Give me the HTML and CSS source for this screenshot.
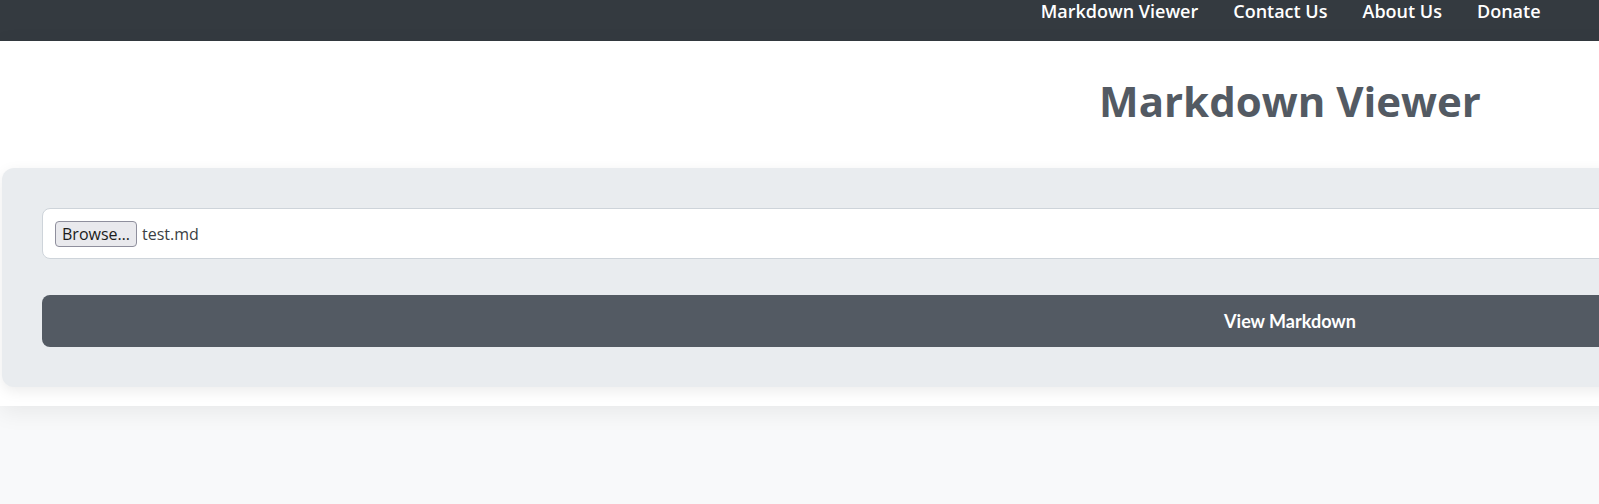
FILE: index.html
```html
<!DOCTYPE html>
<html lang="en">
<head>
<meta charset="utf-8">
<title>Markdown Viewer</title>
<link rel="stylesheet" href="styles.css">
</head>
<body>
<nav class="topbar">
  <ul class="nav-links">
    <li><a href="#">Markdown Viewer</a></li>
    <li><a href="#">Contact Us</a></li>
    <li><a href="#">About Us</a></li>
    <li><a href="#">Donate</a></li>
  </ul>
</nav>
<main class="page">
  <h1 class="title">Markdown Viewer</h1>
  <section class="card">
    <div class="file-input">
      <span class="browse">Browse…</span>
      <span class="file-name">test.md</span>
    </div>
    <button class="view-btn" type="button">View Markdown</button>
  </section>
</main>
</body>
</html>
```
FILE: styles.css
```css
html {
  overflow: hidden;
}
body {
  margin: 0;
  background: #f8f9fa;
  font-family: "Open Sans", "Liberation Sans", sans-serif;
  min-height: 504px;
}
.topbar {
  background: #343a40;
  height: 41px;
  display: flex;
  justify-content: flex-end;
  padding-right: 41px;
}
.nav-links {
  list-style: none;
  margin: 0;
  padding: 0;
  display: flex;
  align-items: flex-start;
}
.nav-links a {
  display: block;
  color: #ffffff;
  text-decoration: none;
  font-weight: 600;
  font-size: 18px;
  line-height: 23px;
  padding: 0 17.5px;
}
.page {
  width: 2580px;
  box-sizing: border-box;
  padding: 35px 2px 19px;
  background: #ffffff;
  box-shadow: 0 6px 22px rgba(0, 0, 0, 0.07);
  position: relative;
}
.title {
  margin: 0 0 42px;
  text-align: center;
  font-size: 42px;
  line-height: 1.2;
  font-weight: 700;
  color: #535a63;
}
.card {
  background: #e9ecef;
  border-radius: 12px;
  padding: 40px;
  box-shadow: 0 4px 14px rgba(0, 0, 0, 0.08);
  display: flex;
  flex-direction: column;
  gap: 36px;
}
.file-input {
  height: 51px;
  box-sizing: border-box;
  background: #ffffff;
  border: 1px solid #ced4da;
  border-radius: 8px;
  display: flex;
  align-items: center;
  padding-left: 12px;
  gap: 5px;
  font-size: 16px;
}
.browse {
  box-sizing: border-box;
  height: 26px;
  width: 82px;
  display: flex;
  align-items: center;
  justify-content: center;
  background: #e9e9ed;
  border: 1px solid #8f8f9d;
  border-radius: 4px;
  color: #1b1b1b;
  font-size: 16px;
}
.file-name {
  color: #3b3f44;
}
.view-btn {
  height: 52px;
  border: 0;
  border-radius: 8px;
  background: #535a63;
  color: #ffffff;
  font-family: Lato, "Open Sans", sans-serif;
  font-weight: 700;
  font-size: 18px;
  padding: 0;
}
```
